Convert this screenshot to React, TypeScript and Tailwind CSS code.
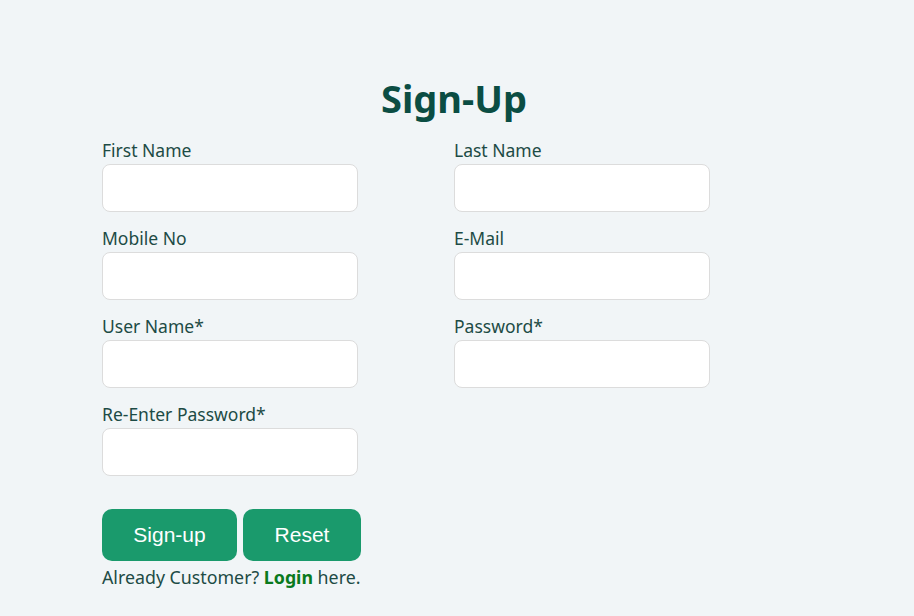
import React from 'react';

const fields = [
  ['First Name', 'Last Name'],
  ['Mobile No', 'E-Mail'],
  ['User Name*', 'Password*'],
  ['Re-Enter Password*'],
];

function Field({ label }: { label: string }) {
  return (
    <div className="flex flex-col w-[256px]">
      <label className="text-[17.5px] leading-[28px] text-[#1d4b45]">{label}</label>
      <input
        type={label.startsWith('Password') || label.startsWith('Re-Enter') ? 'password' : 'text'}
        className="h-[48px] w-full bg-white border border-[#dcdcdc] rounded-[8px] outline-none px-3"
      />
    </div>
  );
}

export default function App() {
  return (
    <div
      className="min-h-[616px] w-full bg-[#f1f5f7] pt-[74px]"
      style={{ fontFamily: '"Noto Sans", "Open Sans", sans-serif' }}
    >
      <h1 className="text-center text-[38px] leading-[48px] font-bold text-[#0b4d43] pr-[6px]">Sign-Up</h1>
      <form className="ml-[102px] mt-[14px] flex flex-col gap-[12px]">
        {fields.map((row, i) => (
          <div key={i} className="flex gap-[96px]">
            {row.map((f) => (
              <Field key={f} label={f} />
            ))}
          </div>
        ))}
        <div className="mt-[21px] flex gap-[6px]">
          <button
            type="button"
            className="h-[52px] w-[135px] rounded-[10px] bg-[#1a9a6c] text-white text-[21px]"
            style={{ fontFamily: '"Liberation Sans", Arial, sans-serif' }}
          >
            Sign-up
          </button>
          <button
            type="button"
            className="h-[52px] w-[118px] rounded-[10px] bg-[#1a9a6c] text-white text-[21px]"
            style={{ fontFamily: '"Liberation Sans", Arial, sans-serif' }}
          >
            Reset
          </button>
        </div>
      </form>
      <p className="ml-[102px] mt-[2px] text-[17.8px] leading-[28px] text-[#1d4b45]">
        Already Customer? <a className="font-bold text-[#0a7a1e]">Login</a> here.
      </p>
    </div>
  );
}
